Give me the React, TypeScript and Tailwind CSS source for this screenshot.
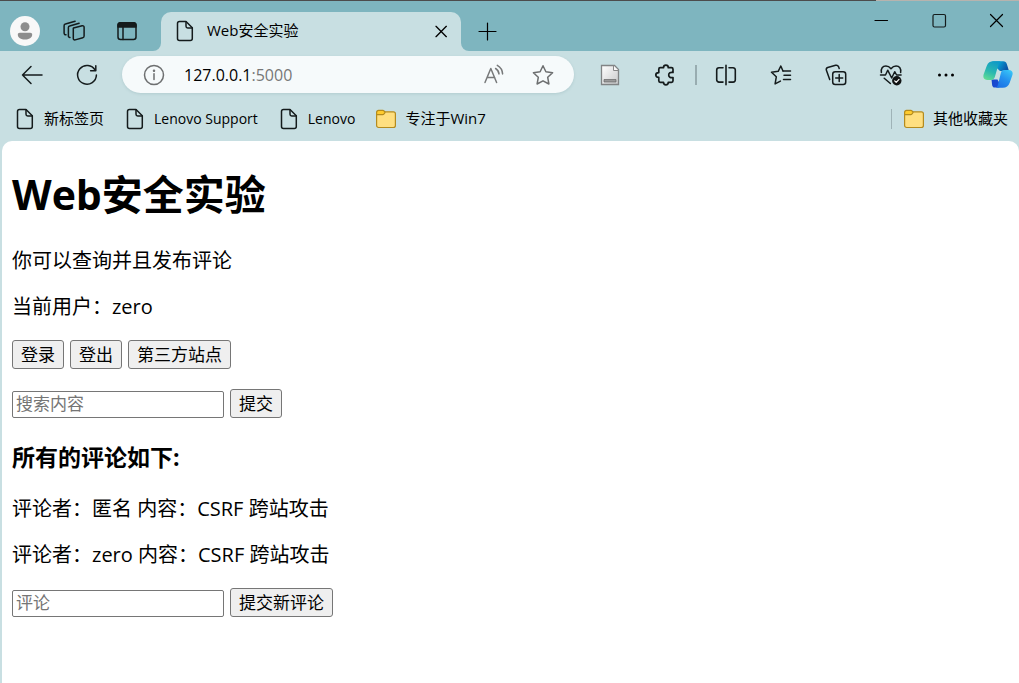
import type { ReactNode } from 'react';

type IconProps = { children: ReactNode; size?: string; color?: string };

function Icon({ children, size = 'size-6', color = 'text-[#141b1c]' }: IconProps) {
  return (
    <svg
      viewBox="0 0 24 24"
      aria-hidden="true"
      className={`${size} ${color} shrink-0`}
      fill="none"
      stroke="currentColor"
      strokeWidth="1.5"
      strokeLinecap="round"
      strokeLinejoin="round"
    >
      {children}
    </svg>
  );
}

function PageIcon() {
  return (
    <Icon>
      <path d="M6.500 2.500h6.500l6.300 6.200v10.800a2 2 0 0 1-2 2H6.500a2 2 0 0 1-2-2v-15a2 2 0 0 1 2-2Z" />
      <path d="M13 2.700v4.600A1.700 1.700 0 0 0 14.700 9h4.500" />
    </Icon>
  );
}

function FolderIcon() {
  return (
    <svg viewBox="0 0 24 24" aria-hidden="true" className="size-6 shrink-0">
      <rect x="2.600" y="4.800" width="18.800" height="15.700" rx="2" fill="#ffdf80" stroke="#b48b1e" strokeWidth="1.200" />
      <path
        d="M2.600 7V5.300a1.900 1.900 0 0 1 1.900-1.900h4.300c.5 0 1 .2 1.300.6l.7.800c.4.5.3 1-.1 1.400l-.9.9c-.3.400-.7.500-1.100.500H2.600Z"
        fill="#ffcb2d"
        stroke="#b48b1e"
        strokeWidth="1.200"
      />
    </svg>
  );
}

function CopilotIcon() {
  return (
    <svg viewBox="0 0 30 27" aria-hidden="true" className="h-[27px] w-[30px] shrink-0">
      <defs>
        <linearGradient id="ribbonTop" x1="0" y1="0" x2="1" y2="0.3">
          <stop offset="0" stopColor="#16b6d0" />
          <stop offset="0.5" stopColor="#0796cf" />
          <stop offset="1" stopColor="#0a55a8" />
        </linearGradient>
        <linearGradient id="ribbonLeft" x1="0.6" y1="0" x2="0.2" y2="1">
          <stop offset="0" stopColor="#0f9ac6" />
          <stop offset="0.55" stopColor="#2bb8b0" />
          <stop offset="1" stopColor="#62dc94" />
        </linearGradient>
        <linearGradient id="ribbonRight" x1="0.8" y1="0" x2="0.2" y2="1">
          <stop offset="0" stopColor="#38c5f7" />
          <stop offset="0.5" stopColor="#2490ee" />
          <stop offset="1" stopColor="#1c6fe4" />
        </linearGradient>
        <linearGradient id="ribbonBottom" x1="0" y1="0" x2="1" y2="0.6">
          <stop offset="0" stopColor="#1744c9" />
          <stop offset="1" stopColor="#1a4fd6" />
        </linearGradient>
      </defs>
      <path d="M8 1.700C8.700.700 9.700.300 11 .300h9.200c2 0 3 .9 3.600 2.600l2.200 7H17l-3.200-3Z" fill="url(#ribbonTop)" />
      <path d="M8.500 18.400h6l3 5.600-1.400 2.600h-4.500c-1.300 0-2-.8-2.400-2.100Z" fill="url(#ribbonBottom)" />
      <path d="M10.700.300h7.800c-1.600 0-2.400 1-2.900 2.700L12 15.500c-.7 2.400-1.700 3.400-3.900 3.400H4C.9 18.900-.2 16.600.6 13.500L3.700 5C4.900 1.700 7.200.300 10.700.300Z" fill="url(#ribbonLeft)" />
      <path d="M21 8.900h4.800c3.100 0 4.500 2.200 3.600 5.200l-2.700 7.700c-1.300 3.500-3.400 4.900-6.900 4.900h-8.100c1.700 0 2.700-.9 3.200-2.800l2.900-11.700c.6-2.300 1.400-3.300 3.200-3.300Z" fill="url(#ribbonRight)" />
    </svg>
  );
}

function ToolButton({ label, children, className = 'w-[55px]' }: { label: string; children: ReactNode; className?: string }) {
  return (
    <button type="button" aria-label={label} className={`flex h-9 shrink-0 items-center justify-center ${className}`}>
      {children}
    </button>
  );
}

function Bookmark({ label, icon = <PageIcon />, className = 'text-[15px]' }: { label: string; icon?: ReactNode; className?: string }) {
  return (
    <a href="#" className={`flex shrink-0 items-center gap-[7px] whitespace-nowrap ${className}`}>
      {icon}
      {label}
    </a>
  );
}

function TabStrip() {
  return (
    <header className="flex h-[50px] items-end bg-[#7eb5bf]">
      <div className="flex h-10 items-center">
        <button
          type="button"
          aria-label="个人资料"
          className="ml-[10px] flex size-[30px] items-center justify-center rounded-full bg-[#f8f8f8]"
        >
          <svg viewBox="0 0 20 20" aria-hidden="true" className="size-5" fill="#8d8d8d">
            <circle cx="10" cy="5.700" r="4.500" />
            <path d="M4.800 11.800h10.400c1.200 0 2 .8 2 1.800 0 3.200-3.200 5-7.200 5s-7.200-1.800-7.200-5c0-1 .8-1.800 2-1.800Z" />
          </svg>
        </button>
        <ToolButton label="工作区" className="ml-2 w-[52px]">
          <Icon>
            <path d="m11.500 8.900 8.600-2.100c1.200-.3 2 .4 2 1.500v8.800c0 .8-.5 1.500-1.300 1.700l-7.600 2.100c-1.100.3-1.900-.3-1.900-1.400v-9.100c0-.8-.3-1.200.2-1.500Z" />
            <path d="M8 18.400c-1 .1-1.600-.5-1.600-1.500V8.600c0-.8.400-1.400 1.200-1.600l9.500-2.700" />
            <path d="M4 15.700c-1.200.1-1.900-.5-1.900-1.600V6.700c0-.8.500-1.500 1.300-1.700l9.700-2.800" />
          </Icon>
        </ToolButton>
        <ToolButton label="标签页操作菜单" className="w-[53px]">
          <Icon>
            <rect x="3" y="3.800" width="18" height="16.800" rx="2.500" />
            <path d="M3 8V6.300a2.500 2.500 0 0 1 2.500-2.500h13A2.500 2.500 0 0 1 21 6.300V8Z" fill="currentColor" />
            <path d="M8 8v12.500" />
          </Icon>
        </ToolButton>
      </div>
      <svg viewBox="0 0 8 8" aria-hidden="true" className="size-2 shrink-0 text-[#c8dfe2]">
        <path d="M8 0v8H0a8 8 0 0 0 8-8Z" fill="currentColor" />
      </svg>
      <div className="flex h-[39px] w-[300px] items-center rounded-t-[10px] bg-[#c8dfe2] pr-[10px] pb-[2px] pl-3 text-[15px]">
        <PageIcon />
        <span className="ml-[10px] flex-1">Web安全实验</span>
        <button type="button" aria-label="关闭标签页" className="flex size-5 items-center justify-center">
          <Icon size="size-4" color="text-black">
            <path d="M4.500 5 20 20.500M20 5 4.500 20.500" strokeWidth="2" />
          </Icon>
        </button>
      </div>
      <svg viewBox="0 0 8 8" aria-hidden="true" className="size-2 shrink-0 text-[#c8dfe2]">
        <path d="M0 0v8h8a8 8 0 0 1-8-8Z" fill="currentColor" />
      </svg>
      <ToolButton label="新建标签页" className="mb-[2px] w-9">
        <Icon color="text-black">
          <path d="M12.500 4v17M4 12.500h17" strokeWidth="1.200" />
        </Icon>
      </ToolButton>
      <div className="ml-auto flex self-start">
        <ToolButton label="最小化" className="mt-px w-[58px]">
          <Icon color="text-black">
            <path d="M6 12.500h12.500" strokeWidth="1.200" />
          </Icon>
        </ToolButton>
        <ToolButton label="最大化" className="mt-px w-[58px]">
          <Icon>
            <rect x="6" y="6.500" width="12.500" height="12.500" rx="1.500" strokeWidth="1.200" />
          </Icon>
        </ToolButton>
        <ToolButton label="关闭" className="mt-px w-[51px] pl-1">
          <Icon color="text-black">
            <path d="m6.500 6.500 12 12M18.500 6.500l-12 12" strokeWidth="1.200" />
          </Icon>
        </ToolButton>
      </div>
    </header>
  );
}

function Toolbar() {
  return (
    <div className="flex h-[47px] items-center">
      <ToolButton label="返回" className="ml-1 w-[55px]">
        <Icon>
          <path d="M22 12H2.500M11 3.500 2.500 12l8.500 8.500" />
        </Icon>
      </ToolButton>
      <ToolButton label="刷新">
        <Icon>
          <path d="M20.200 7.200A9.400 9.400 0 1 0 21.400 12" />
          <path d="M20.800 2.800v4.900h-5.200" />
        </Icon>
      </ToolButton>
      <div className="ml-2 flex h-[37px] min-w-0 flex-1 items-center rounded-full bg-[#f6fafb] pr-[19px] pl-5 shadow-[0_1px_3px_rgba(80,120,130,0.18)]">
        <Icon color="text-[#6d6f70]">
          <circle cx="12" cy="12" r="9.500" />
          <path d="M12 10.800v5.700" />
          <circle cx="12" cy="7.800" r=".5" fill="currentColor" />
        </Icon>
        <div className="ml-[18px] flex-1 text-[16px] text-[#777]">
          <span className="text-black">127.0.0.1</span>:5000
        </div>
        <button type="button" aria-label="大声朗读此页内容">
          <Icon color="text-[#77797a]">
            <path d="M3 19.500 8.800 5.500l5.800 14M5 14.500h7.700" />
            <path d="M13.600 5.500c2 1.200 3.200 3 3.400 5.400M15.300 2.400c3.200 1.800 5.100 4.600 5.300 8.500" />
          </Icon>
        </button>
        <button type="button" aria-label="收藏此页" className="ml-[25px]">
          <Icon color="text-[#6d6f70]">
            <path d="m12 2.700 2.900 6.100 6.700.9-4.900 4.600 1.200 6.700-5.900-3.200L6.100 21l1.200-6.700-4.900-4.600 6.700-.9Z" />
          </Icon>
        </button>
      </div>
      <ToolButton label="扩展程序" className="ml-2 w-[55px]">
        <svg viewBox="0 0 24 24" aria-hidden="true" className="size-6">
          <defs>
            <linearGradient id="sheet" x1="0" y1="0" x2="1" y2="1">
              <stop offset="0" stopColor="#fff" />
              <stop offset="1" stopColor="#c8c9ca" />
            </linearGradient>
          </defs>
          <path d="M3.500 2.500h13l4 4v15h-17Z" fill="url(#sheet)" stroke="#818485" strokeWidth="1.300" />
          <path d="M15.500 2.700v4.800h4.800" fill="#f8f8f8" stroke="#888" strokeWidth="1" />
          <path d="M6 16.500h12v2.500H6Z" fill="#999" stroke="#666" strokeWidth=".7" />
        </svg>
      </ToolButton>
      <ToolButton label="扩展">
        <Icon>
          <path
            strokeWidth="1.700"
            d="M7.300 4.700h3.200c0-1.700 1-2.600 2.400-2.600s2.400.9 2.400 2.600h3.200c1 0 1.500.6 1.500 1.500v3.300c-2.600-.6-4.300.6-4.300 2.500s1.700 3.100 4.300 2.500v3.300c0 1-.6 1.500-1.500 1.500h-3.200c0 1.700-1 2.600-2.400 2.600s-2.400-.9-2.400-2.600H7.300c-.9 0-1.500-.6-1.500-1.500v-3.400c-1.900 0-3-.9-3-2.400s1.100-2.400 3-2.400V6.200c0-.9.600-1.500 1.500-1.500Z"
          />
        </Icon>
      </ToolButton>
      <div className="mr-px ml-[3px] h-5 w-[2px] bg-[#98acb0]" />
      <ToolButton label="分屏">
        <Icon>
          <path d="M12 2.300v19.400M9 4.700H5a2.300 2.300 0 0 0-2.300 2.300v9.800A2.300 2.300 0 0 0 5 19.100h4M15 4.700h4A2.300 2.300 0 0 1 21.300 7v9.800a2.300 2.300 0 0 1-2.300 2.300h-4" strokeWidth="1.600" />
        </Icon>
      </ToolButton>
      <ToolButton label="收藏夹">
        <Icon>
          <path d="M14 8 11.800 3 9.200 8.300l-6.700 1 4.800 4.500-1.200 7.100 5.300-2.800" />
          <path d="M14 8h7.500M15 12.300h6.500M14.500 16.500h7" />
        </Icon>
      </ToolButton>
      <ToolButton label="集锦">
        <Icon>
          <rect x="8.700" y="8.700" width="13" height="12.800" rx="2.500" />
          <path d="M15.200 11.500v7M11.700 15h7" />
          <path d="M5.700 16.500 2.400 7.300c-.5-1.300 0-2.300 1.300-2.800l7.900-2.200c1.400-.4 2.300 0 2.900 1.300l.7 1.900" />
        </Icon>
      </ToolButton>
      <ToolButton label="浏览器概要">
        <Icon>
          <path d="M2.400 9.500c-.7-4 1.200-6.500 4.500-6.500 2.200 0 3.700 1 5.100 2.700C13.400 4 14.900 3 17.100 3c3.300 0 5.200 2.500 4.500 6.500" />
          <path d="M1.500 12h5l2.200-4.800 4 7.800 3-6.300 1.900 3.300h4.500M5.200 15.200l6.200 5.300" />
          <circle cx="17.800" cy="17.800" r="4.700" fill="#101414" stroke="none" />
          <path d="m15.700 17.900 1.500 1.500 2.800-3" stroke="#fff" strokeWidth="1.200" />
        </Icon>
      </ToolButton>
      <ToolButton label="设置及其他">
        <Icon color="text-black">
          <g fill="currentColor" stroke="none">
            <circle cx="5.500" cy="12" r="1.500" />
            <circle cx="12" cy="12" r="1.500" />
            <circle cx="18.500" cy="12" r="1.500" />
          </g>
        </Icon>
      </ToolButton>
      <ToolButton label="Copilot" className="w-[46px] pl-[3px]">
        <CopilotIcon />
      </ToolButton>
    </div>
  );
}

function BookmarkBar() {
  return (
    <nav aria-label="收藏夹栏" className="flex h-[43px] items-center pr-[11px] pb-[2px] pl-[13px]">
      <div className="flex items-center gap-[19px]">
        <Bookmark label="新标签页" />
        <Bookmark label="Lenovo Support" className="text-[14px]" />
        <Bookmark label="Lenovo" className="text-[14px]" />
        <Bookmark label="专注于Win7" icon={<FolderIcon />} />
      </div>
      <div className="ml-auto flex items-center gap-[10px]">
        <div className="h-5 w-px bg-[#9fb3b7]" />
        <Bookmark label="其他收藏夹" icon={<FolderIcon />} />
      </div>
    </nav>
  );
}

function PushButton({ children, type = 'button' }: { children: ReactNode; type?: 'button' | 'submit' }) {
  return (
    <button type={type} className="rounded-[3px] border border-[#767676] bg-[#efefef] px-2 py-[2px] text-[17px] leading-[23px]">
      {children}
    </button>
  );
}

function EntryForm({ id, hint, action }: { id: string; hint: string; action: string }) {
  return (
    <form className="flex items-end gap-[6px]" onSubmit={(event) => event.preventDefault()}>
      <input
        id={id}
        type="text"
        aria-label={hint}
        placeholder={hint}
        className="h-[27px] w-[212px] rounded-[2px] border border-[#767676] bg-white px-[3px] pb-[2px] text-[17px] leading-[23px] placeholder:text-[#757575]"
      />
      <PushButton type="submit">{action}</PushButton>
    </form>
  );
}

const comments = [
  { author: '匿名', text: 'CSRF 跨站攻击' },
  { author: 'zero', text: 'CSRF 跨站攻击' },
];

export default function App() {
  return (
    <div
      lang="zh-CN"
      className="flex min-h-screen flex-col bg-[#c8dfe2] font-['Open_Sans','Noto_Sans_CJK_SC',sans-serif] text-black"
    >
      <div className="flex h-px">
        <div className="flex-1 bg-[#4c4c4c]" />
        <div className="w-[14%] bg-[#b7b3ae]" />
      </div>
      <TabStrip />
      <Toolbar />
      <BookmarkBar />
      <main className="ml-[2px] flex-1 rounded-t-[10px] bg-white px-[10px] pt-[27px] pb-8 text-[20px] leading-[26px]">
        <h1 className="text-[41px] leading-[53px] font-bold">Web安全实验</h1>
        <div className="mt-[27px] flex flex-col gap-5">
          <p>你可以查询并且发布评论</p>
          <p>当前用户：zero</p>
          <div className="flex gap-[6px]">
            <PushButton>登录</PushButton>
            <PushButton>登出</PushButton>
            <PushButton>第三方站点</PushButton>
          </div>
          <EntryForm id="search" hint="搜索内容" action="提交" />
        </div>
        <h3 className="mt-[23px] text-[23px] leading-[32px] font-bold">所有的评论如下:</h3>
        <div className="mt-[23px] flex flex-col gap-5">
          {comments.map((comment) => (
            <p key={comment.author}>
              评论者：{comment.author} 内容：{comment.text}
            </p>
          ))}
          <EntryForm id="comment" hint="评论" action="提交新评论" />
        </div>
      </main>
    </div>
  );
}
